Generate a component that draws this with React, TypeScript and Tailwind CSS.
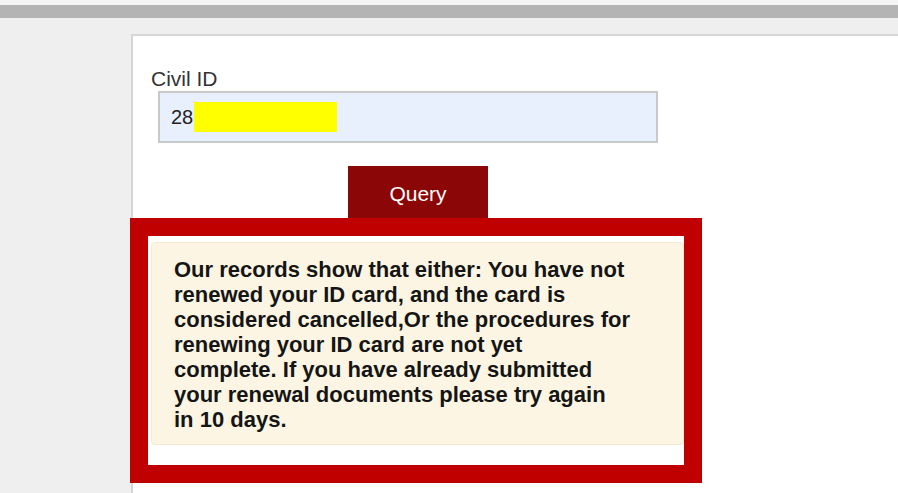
export default function App() {
  const lines = [
    "Our records show that either: You have not",
    "renewed your ID card, and the card is",
    "considered cancelled,Or the procedures for",
    "renewing your ID card are not yet",
    "complete. If you have already submitted",
    "your renewal documents please try again",
    "in 10 days.",
  ];
  return (
    <div
      className="h-[493px] w-[898px] overflow-hidden bg-[#efefef]"
      style={{ fontFamily: '"Liberation Sans", Arial, sans-serif' }}
    >
      <div className="h-[5px] bg-[#f4f4f4]" />
      <div className="h-[13px] bg-[#b4b4b4]" />
      <div className="pl-[131px] pt-[16px]">
        <div className="h-[459px] border-l-2 border-t-2 border-[#d6d6d6] bg-white">
          <div className="pl-[18px] pt-[31px] text-[21px] leading-[24px] text-[#333]">Civil ID</div>
          <div className="ml-[25px] mt-[0px] flex h-[52px] w-[500px] items-center border-2 border-[#c9c9c9] bg-[#e8f0fe] pl-[11px]">
            <span className="text-[20px] text-[#222]">28</span>
            <span className="ml-[1px] h-[30px] w-[143px] bg-[#ffff00]" />
          </div>
          <div className="ml-[215px] mt-[23px] flex h-[52px] w-[140px] items-start justify-center bg-[#8b0606] pt-[16px] text-[21px] leading-[24px] text-white">
            Query
          </div>
          <div className="-ml-[3px] h-[265px] w-[572px] border-[18px] border-[#c00000] bg-white pl-[3px] pt-[6px]">
            <div className="h-[203px] w-[533px] rounded-[4px] border border-[#f3ead0] bg-[#fcf5e3] pl-[22px] pt-[14px]">
              {lines.map((l) => (
                <div key={l} className="whitespace-nowrap text-[22px] font-bold leading-[25px] text-[#151515]">
                  {l}
                </div>
              ))}
            </div>
          </div>
        </div>
      </div>
    </div>
  );
}
